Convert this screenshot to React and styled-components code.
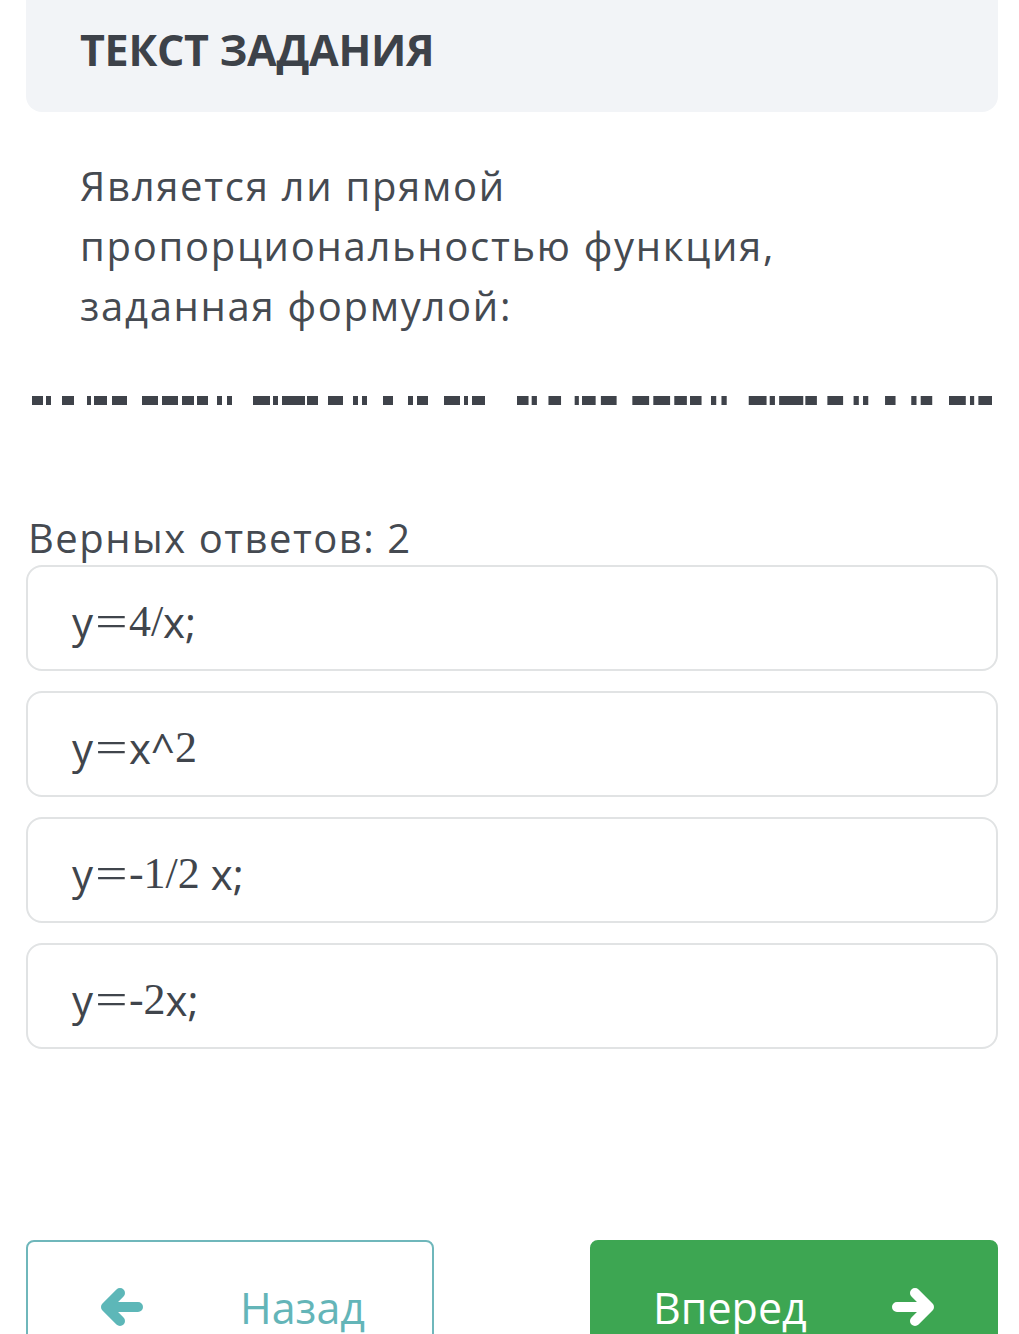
import React from "react";
import styled, { createGlobalStyle } from "styled-components";

const Global = createGlobalStyle`
  html, body { margin: 0; padding: 0; background: #ffffff; }
  body { font-family: "Open Sans", "Noto Sans", sans-serif; color: #454a51; }
  * { box-sizing: border-box; }
`;

const Page = styled.div`
  width: 1019px;
  height: 1334px;
  overflow: hidden;
  padding: 0 21px 0 26px;
  display: flex;
  flex-direction: column;
`;

const HeaderCard = styled.div`
  height: 112px;
  background: #f2f4f7;
  border-radius: 0 0 16px 16px;
  padding: 20px 0 0 54px;
`;

const Title = styled.h1`
  margin: 0;
  font-family: "Open Sans", sans-serif;
  font-weight: 700;
  font-size: 43px;
  line-height: 60px;
  color: #3d4249;
  letter-spacing: -0.3px;
`;

const Question = styled.p`
  margin: 44px 0 0 0;
  padding-left: 54px;
  font-size: 40px;
  line-height: 60px;
  letter-spacing: 1.7px;
  color: #454a51;
  width: 800px;
`;

const Garbled = styled.svg`
  display: block;
  margin-top: 58px;
  margin-left: 4px;
`;

const Count = styled.div`
  margin-top: 103px;
  padding-left: 2px;
  font-size: 40px;
  line-height: 54px;
  letter-spacing: 1.5px;
  color: #454a51;
`;

const Answers = styled.div`
  display: flex;
  flex-direction: column;
  gap: 20px;
`;

const AnswerCard = styled.div`
  height: 106px;
  border: 2px solid #e1e3e4;
  border-radius: 16px;
  padding: 6px 0 0 44px;
  display: flex;
  align-items: center;
  font-size: 42px;
  color: #40454c;
`;

const V = styled.span`
  font-family: "Open Sans", sans-serif;
  white-space: pre;
`;
const N = styled.span`
  font-family: "Liberation Serif", "DejaVu Serif", serif;
  font-size: 44px;
  white-space: pre;
`;
const Eq = styled.span`
  font-family: "Liberation Serif", "DejaVu Serif", serif;
  font-size: 44px;
  margin: 0 5px 0 6px;
  transform: scaleX(1.3);
  display: inline-block;
`;

const Footer = styled.div`
  margin-top: auto;
  display: flex;
  justify-content: space-between;
  height: 94px;
`;

const NavButton = styled.button`
  width: 408px;
  height: 120px;
  border-radius: 8px;
  display: flex;
  align-items: flex-start;
  padding-top: 36px;
  font-family: "Open Sans", sans-serif;
  font-size: 43px;
  line-height: 60px;
  cursor: pointer;
  border: 2px solid ${(p) => (p.$primary ? "#3da652" : "#6fb7bb")};
  background: ${(p) => (p.$primary ? "#3da652" : "#ffffff")};
  color: ${(p) => (p.$primary ? "#ffffff" : "#64b5b8")};
  padding-left: ${(p) => (p.$primary ? "61px" : "72px")};
`;

const Arrow = styled.svg`
  display: block;
  flex: none;
  margin-top: 10px;
  margin-left: ${(p) => p.$ml || 0}px;
  margin-right: ${(p) => p.$mr || 0}px;
`;

function ArrowIcon({ dir, color, ...rest }) {
  const d =
    dir === "left"
      ? "M20 5 L6 19 L20 33 M6 19 H38"
      : "M24 5 L38 19 L24 33 M38 19 H6";
  return (
    <Arrow width="44" height="38" viewBox="0 0 44 38" {...rest}>
      <path
        d={d}
        fill="none"
        stroke={color}
        strokeWidth="10"
        strokeLinecap="round"
        strokeLinejoin="round"
      />
    </Arrow>
  );
}

const pattern = [
  [32, 11], [46, 5], [62, 12], [87, 4], [94, 13], [112, 15],
  [142, 16], [162, 16], [182, 12], [197, 11], [217, 5], [227, 5],
  [253, 17], [273, 5], [282, 23], [307, 11], [328, 15], [353, 5], [362, 5],
  [383, 10], [408, 5], [417, 11], [444, 16], [464, 4], [472, 13],
];

function GarbledFormula() {
  const scale2 = 475 / 453;
  return (
    <Garbled width="972" height="14" viewBox="0 0 972 14">
      <g fill="#3f434a">
        {pattern.map(([x, w], i) => (
          <rect key={"a" + i} x={x - 30} y={2} width={w} height={9} />
        ))}
        {pattern.map(([x, w], i) => (
          <rect key={"b" + i} x={487 + (x - 32) * scale2} y={2} width={w * scale2} height={9} />
        ))}
      </g>
    </Garbled>
  );
}

const answers = [
  [["n", "4/"], ["v", "x;"]],
  [["v", "x^"], ["n", "2"]],
  [["n", "-1/2"], ["v", " x;"]],
  [["n", "-2"], ["v", "x;"]],
];

export default function App() {
  return (
    <>
      <Global />
      <Page>
        <HeaderCard>
          <Title>ТЕКСТ ЗАДАНИЯ</Title>
        </HeaderCard>
        <Question>
          Является ли прямой пропорциональностью функция, заданная формулой:
        </Question>
        <GarbledFormula />
        <Count>Верных ответов: 2</Count>
        <Answers>
          {answers.map((parts, i) => (
            <AnswerCard key={i}>
              <V>y</V>
              <Eq>=</Eq>
              {parts.map(([k, t], j) =>
                k === "v" ? <V key={j}>{t}</V> : <N key={j}>{t}</N>
              )}
            </AnswerCard>
          ))}
        </Answers>
        <Footer>
          <NavButton>
            <ArrowIcon dir="left" color="#5db7b8" $mr={96} />
            Назад
          </NavButton>
          <NavButton $primary>
            Вперед
            <ArrowIcon dir="right" color="#ffffff" $ml={84} />
          </NavButton>
        </Footer>
      </Page>
    </>
  );
}
